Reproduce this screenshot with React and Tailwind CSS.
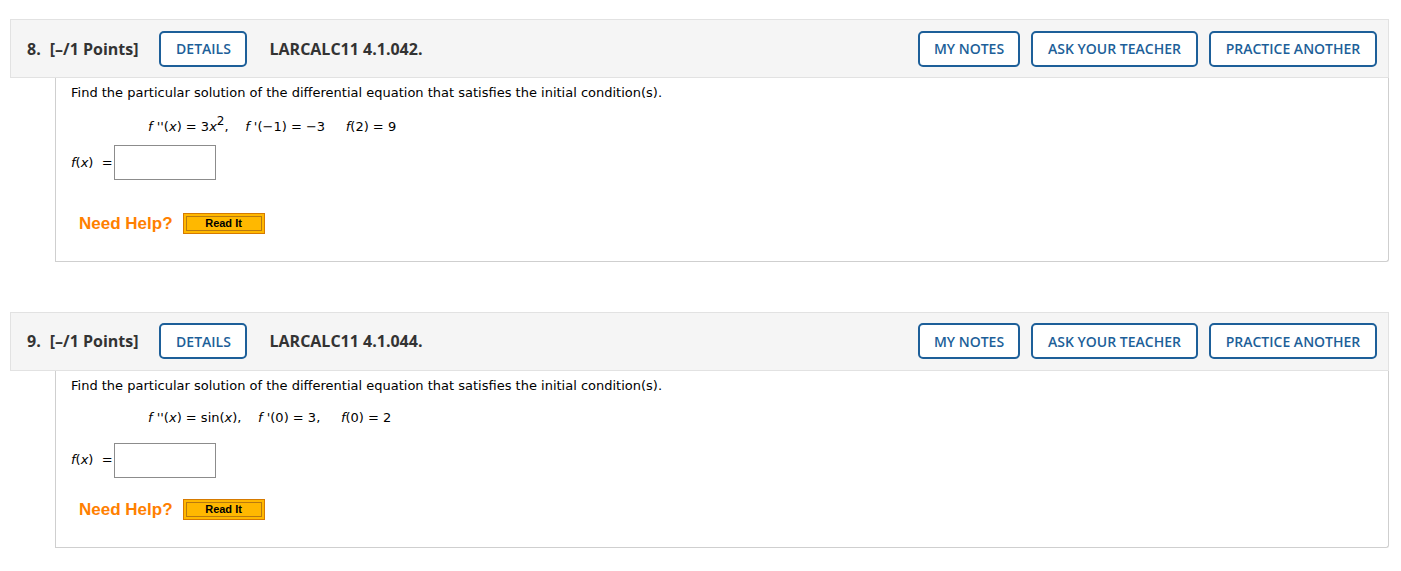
import React from "react";

const blue = "border-[#1d5f99] text-[#1d5f99]";

const HeaderButton = ({ children, className = "" }) => (
  <button
    className={`h-[36px] whitespace-nowrap rounded-[5px] border-2 ${blue} bg-white text-[14px] font-semibold ${className}`}
  >
    {children}
  </button>
);

const Question = ({ num, code, equation, gaps }) => (
  <div className="pl-[10px] pr-[12px]">
    <div className="flex h-[59px] items-center border border-[#e2e2e2] bg-[#f5f5f5] pl-[16px] pr-[11px] text-[#333] font-['Open_Sans',sans-serif]">
      <span className="text-[16px] font-bold">{num}.</span>
      <span className="ml-[9px] text-[16px] font-bold">[–/1 Points]</span>
      <HeaderButton className="ml-[21px] w-[88px]">DETAILS</HeaderButton>
      <span className="ml-[22px] text-[16px] font-bold">{code}</span>
      <div className="ml-auto flex gap-[11px]">
        <HeaderButton className="w-[102px]">MY NOTES</HeaderButton>
        <HeaderButton className="w-[167px]">ASK YOUR TEACHER</HeaderButton>
        <HeaderButton className="w-[168px]">PRACTICE ANOTHER</HeaderButton>
      </div>
    </div>
    <div
      className="ml-[45px] rounded-br-[3px] border-x border-b border-[#cfcfcf] bg-white pl-[15px] text-[13px] text-black font-['DejaVu_Sans',Verdana,sans-serif]"
      style={{ paddingTop: gaps[0], paddingBottom: gaps[4] }}
    >
      <p className="leading-[16px]">
        Find the particular solution of the differential equation that satisfies the initial condition(s).
      </p>
      <p className="ml-[77px] leading-[16px] whitespace-pre" style={{ marginTop: gaps[1] }}>
        {equation}
      </p>
      <div className="flex items-center" style={{ marginTop: gaps[2] }}>
        <span className="w-[43px] whitespace-pre">
          <i>f</i>(<i>x</i>)  =
        </span>
        <div className="h-[35px] w-[102px] border border-[#8c8c8c] bg-white" />
      </div>
      <div className="ml-[8px] flex items-center font-['Liberation_Sans',Arial,sans-serif]" style={{ marginTop: gaps[3] }}>
        <span className="text-[17px] font-bold text-[#ff8000]">Need Help?</span>
        <button className="ml-[10px] h-[21px] w-[82px] border border-[#d67a00] bg-[#ffb800] p-[2px]">
          <span className="flex h-full w-full items-center justify-center border border-[#b87a10] text-[11px] font-bold leading-none text-black">
            Read It
          </span>
        </button>
      </div>
    </div>
  </div>
);

export default function App() {
  return (
    <div className="min-h-[571px] w-[1401px] bg-white pt-[19px]">
      <Question
        num="8"
        code="LARCALC11 4.1.042."
        gaps={[7, 18, 10, 31, 24]}
        equation={
          <>
            <i>f</i> ''(<i>x</i>) = 3<i>x</i>
            <sup className="text-[12px]">2</sup>,    <i>f</i> '(−1) = −3     <i>f</i>(2) = 9
          </>
        }
      />
      <div className="h-[50px]" />
      <Question
        num="9"
        code="LARCALC11 4.1.044."
        gaps={[7, 16, 17, 19, 25]}
        equation={
          <>
            <i>f</i> ''(<i>x</i>) = sin(<i>x</i>),    <i>f</i> '(0) = 3,     <i>f</i>(0) = 2
          </>
        }
      />
    </div>
  );
}
